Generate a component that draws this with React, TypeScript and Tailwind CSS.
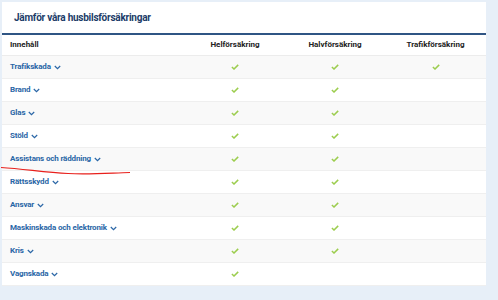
const rows: { label: string; cover: [boolean, boolean, boolean] }[] = [
  { label: "Trafikskada", cover: [true, true, true] },
  { label: "Brand", cover: [true, true, false] },
  { label: "Glas", cover: [true, true, false] },
  { label: "Stöld", cover: [true, true, false] },
  { label: "Assistans och räddning", cover: [true, true, false] },
  { label: "Rättsskydd", cover: [true, true, false] },
  { label: "Ansvar", cover: [true, true, false] },
  { label: "Maskinskada och elektronik", cover: [true, true, false] },
  { label: "Kris", cover: [true, true, false] },
  { label: "Vagnskada", cover: [true, false, false] },
];

function Chevron() {
  return (
    <svg width="7" height="5" viewBox="0 0 7 5" className="ml-[3px] mt-[1px]">
      <path d="M0.8 1 L3.5 3.7 L6.2 1" fill="none" stroke="#2a66a6" strokeWidth="1.2" />
    </svg>
  );
}

function Check() {
  return (
    <svg width="8" height="6" viewBox="0 0 8 6">
      <path d="M0.9 3 L3 5 L7.2 0.9" fill="none" stroke="#9ccd4e" strokeWidth="1.5" />
    </svg>
  );
}

export default function App() {
  return (
    <div
      className="relative w-[498px] h-[300px] bg-[#e7eff8] p-[2px]"
      style={{ fontFamily: "Roboto, 'Liberation Sans', sans-serif" }}
    >
      <div className="w-[484px] bg-white">
        <div className="h-[31px] flex items-center pl-[12px] text-[10px] font-bold text-[#1c3c68] tracking-[-0.25px]">
          Jämför våra husbilsförsäkringar
        </div>
        <div className="border-t-2 border-[#2f5584]">
          <div className="grid grid-cols-[183px_100px_100px_101px] h-[21px] items-center border-b border-[#ececec] text-[8px] font-bold text-[#222]">
            <div className="pl-[8px]">Innehåll</div>
            <div className="text-center">Helförsäkring</div>
            <div className="text-center">Halvförsäkring</div>
            <div className="text-center">Trafikförsäkring</div>
          </div>
          {rows.map((r, i) => (
            <div
              key={r.label}
              className={`grid grid-cols-[183px_100px_100px_101px] h-[23px] items-center border-b border-[#efefef] ${
                i % 2 === 0 ? "bg-[#f9f9f9]" : "bg-white"
              }`}
            >
              <div className="pl-[8px] flex items-center text-[8px] font-bold text-[#2a66a6] tracking-[-0.15px]">
                {r.label}
                <Chevron />
              </div>
              {r.cover.map((c, j) => (
                <div key={j} className="flex justify-center">
                  {c && <Check />}
                </div>
              ))}
            </div>
          ))}
        </div>
      </div>
      <svg className="absolute left-0 top-0 pointer-events-none" width="498" height="300">
        <path
          d="M1 167.5 C 25 169 45 172.5 68 173.5 S 110 173 130 172.5"
          fill="none"
          stroke="#e8201c"
          strokeWidth="1.2"
        />
      </svg>
    </div>
  );
}
